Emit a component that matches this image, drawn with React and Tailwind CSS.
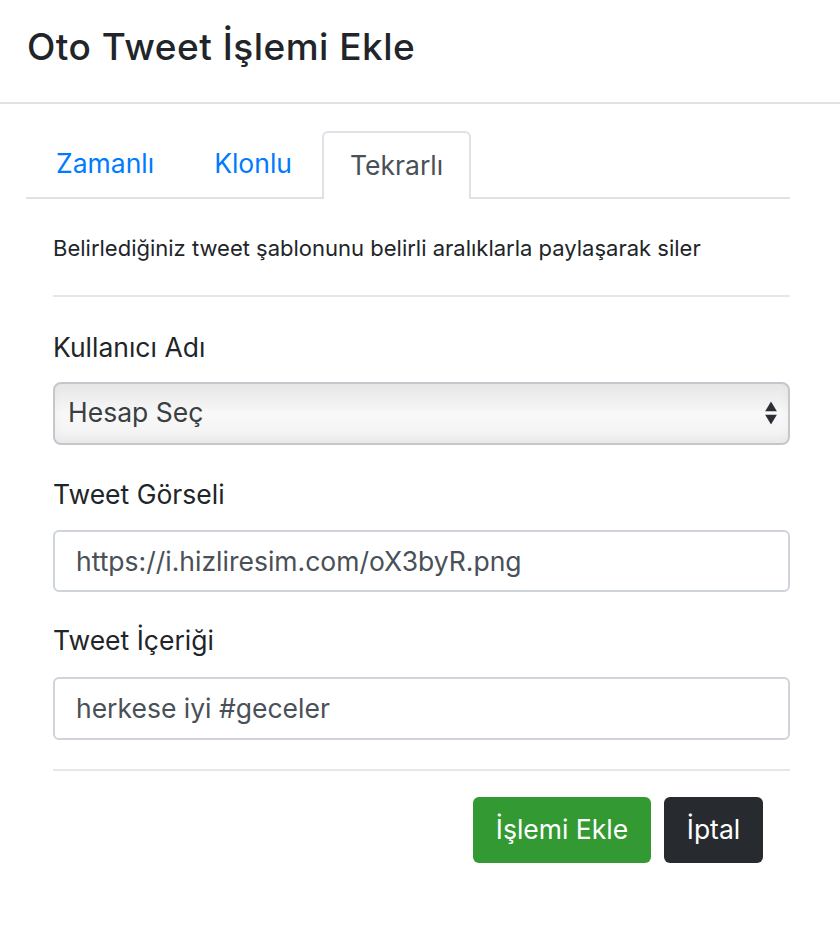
import React, { useState } from "react";

const App = () => {
  const [tab, setTab] = useState("Tekrarlı");
  const tabs = ["Zamanlı", "Klonlu", "Tekrarlı"];

  return (
    <div className="bg-white min-h-screen text-[#212529] font-['Inter','Liberation_Sans',sans-serif]">
      {/* Modal header */}
      <div className="h-[104px] border-b-2 border-[#dee2e6] pl-[27px] flex items-center">
        <h4 className="text-[37px] font-medium tracking-[0.5px] leading-none -mt-[10px]">
          Oto Tweet İşlemi Ekle
        </h4>
      </div>

      {/* Modal body */}
      <div className="pl-[26px] pr-[50px] pt-[27px]">
        {/* Tabs */}
        <div className="flex border-b-2 border-[#dee2e6] h-[68px]">
          {tabs.map((t) => (
            <button
              key={t}
              onClick={() => setTab(t)}
              className={
                t === tab
                  ? "h-[68px] px-[26px] text-[26.5px] text-[#495057] bg-white border-2 border-b-0 border-[#dee2e6] rounded-t-[6px] -mb-[2px]"
                  : "h-[66px] px-[30px] text-[26.5px] text-[#007bff]"
              }
            >
              {t}
            </button>
          ))}
        </div>

        {/* Tab content */}
        <div className="pl-[27px]">
          <p className="text-[22px] mt-[38px] leading-none">
            Belirlediğiniz tweet şablonunu belirli aralıklarla paylaşarak siler
          </p>
          <div className="border-t-2 border-[#e5e7eb] mt-[36px]" />

          <label className="block text-[26.5px] mt-[37px] leading-none">Kullanıcı Adı</label>
          <div className="relative mt-[21px]">
            <select className="appearance-none w-full h-[63px] rounded-[8px] border-2 border-[#c4c8cd] bg-gradient-to-b from-[#e6e6e6] via-[#f8f8f8] to-[#f2f2f2] pl-[13px] text-[26.5px] text-[#3a3f44] shadow-[inset_0_-6px_8px_rgba(0,0,0,0.04)]">
              <option>Hesap Seç</option>
            </select>
            <div className="absolute right-[13px] top-1/2 -translate-y-1/2 flex flex-col items-center gap-[3px] pointer-events-none">
              <svg width="12" height="10" viewBox="0 0 12 10">
                <path d="M6 0 L12 10 L0 10 Z" fill="#2c3034" />
              </svg>
              <svg width="12" height="10" viewBox="0 0 12 10">
                <path d="M0 0 L12 0 L6 10 Z" fill="#2c3034" />
              </svg>
            </div>
          </div>

          <label className="block text-[26.5px] mt-[36px] leading-none">Tweet Görseli</label>
          <input
            className="block w-full h-[62px] mt-[23px] rounded-[6px] border-2 border-[#ced4da] px-[21px] text-[26.5px] text-[#495057] outline-none"
            defaultValue="https://i.hizliresim.com/oX3byR.png"
          />

          <label className="block text-[26.5px] mt-[35px] leading-none">Tweet İçeriği</label>
          <input
            className="block w-full h-[63px] mt-[23px] rounded-[6px] border-2 border-[#ced4da] px-[21px] text-[26.5px] text-[#495057] outline-none"
            defaultValue="herkese iyi #geceler"
          />

          <div className="border-t-2 border-[#e5e7eb] mt-[29px]" />

          <div className="flex justify-end gap-[13px] mt-[26px] pr-[27px]">
            <button className="h-[66px] w-[178px] rounded-[6px] bg-[#339933] text-white text-[26.5px]">
              İşlemi Ekle
            </button>
            <button className="h-[66px] w-[99px] rounded-[6px] bg-[#272b30] text-white text-[26.5px]">
              İptal
            </button>
          </div>
        </div>
      </div>
    </div>
  );
};

export default App;
